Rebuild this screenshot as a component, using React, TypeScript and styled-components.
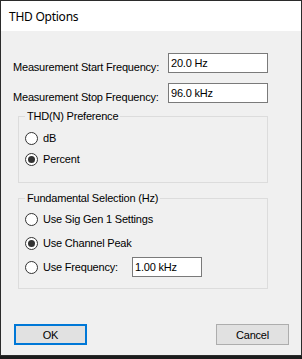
import styled, { createGlobalStyle } from "styled-components";

const GlobalStyle = createGlobalStyle`
  * { box-sizing: border-box; }
  html, body {
    margin: 0;
    padding: 0;
    background: #1c1c1c;
  }
  body {
    font-family: "Liberation Sans", Arial, sans-serif;
    font-size: 11px;
    letter-spacing: -0.2px;
    color: #000;
  }
`

const Window = styled.div`
  width: 302px;
  height: 356px;
  border: 1px solid #2b2b2b;
  background: #f0f0f0;
  display: flex;
  flex-direction: column;
`

const TitleBar = styled.div`
  flex: none;
  height: 30px;
  background: #fff;
  display: flex;
  align-items: center;
  padding-left: 8px;
  font-family: "Noto Sans", "Liberation Sans", sans-serif;
  font-size: 12px;
  letter-spacing: -0.25px;
`

const Body = styled.div`
  flex: 1;
  display: flex;
  flex-direction: column;
  padding: 22px 12px 10px 12px;
`

const FieldRow = styled.div`
  display: flex;
  height: 20px;

  & + & {
    margin-top: 10px;
  }
`

const FieldLabel = styled.label`
  width: 155px;
  padding-top: 8px;
  line-height: 13px;
`

const TextBox = styled.input<{ $w: number }>`
  width: ${({ $w }) => $w}px;
  height: 20px;
  margin: 0;
  border: 1px solid #7a7a7a;
  background: #fff;
  padding: 0 2px;
  font-family: "Liberation Sans", Arial, sans-serif;
  font-size: 11px;
  letter-spacing: -0.2px;
  color: #000;
  outline: none;
`

const Group = styled.fieldset<{ $mt: number; $pt: number; $pb: number }>`
  width: 250px;
  margin: ${({ $mt }) => $mt}px 0 0 5px;
  padding: ${({ $pt }) => $pt}px 6px ${({ $pb }) => $pb}px 6px;
  border: 1px solid #dcdcdc;
  min-width: 0;
`

const Legend = styled.legend`
  padding: 0 2px;
  line-height: 13px;
`

const Option = styled.div<{ $h: number }>`
  display: flex;
  align-items: center;
  height: ${({ $h }) => $h}px;
`

const Radio = styled.span<{ $checked?: boolean }>`
  flex: none;
  width: 13px;
  height: 13px;
  border: 1px solid #333;
  border-radius: 50%;
  background: #fff;
  margin-right: 5px;
  display: flex;
  align-items: center;
  justify-content: center;

  &::after {
    content: "";
    width: 7px;
    height: 7px;
    border-radius: 50%;
    background: ${({ $checked }) => ($checked ? "#333" : "transparent")};
  }
`

const OptionText = styled.span<{ $w?: number }>`
  line-height: 13px;
  width: ${({ $w }) => ($w ? `${$w}px` : "auto")};
`

const ButtonRow = styled.div`
  margin-top: auto;
  display: flex;
  justify-content: space-between;
  padding-left: 1px;
`

const Button = styled.button<{ $default?: boolean }>`
  width: 73px;
  height: 21px;
  padding: 0;
  background: #e1e1e1;
  border: ${({ $default }) => ($default ? "2px solid #0078d7" : "1px solid #adadad")};
  font-family: "Liberation Sans", Arial, sans-serif;
  font-size: 11px;
  letter-spacing: -0.2px;
  color: #000;
`

export default function App() {
  return (
    <>
      <GlobalStyle />
      <Window>
        <TitleBar>THD Options</TitleBar>
        <Body>
          <FieldRow>
            <FieldLabel>Measurement Start Frequency:</FieldLabel>
            <TextBox $w={100} value="20.0 Hz" readOnly />
          </FieldRow>
          <FieldRow>
            <FieldLabel>Measurement Stop Frequency:</FieldLabel>
            <TextBox $w={100} value="96.0 kHz" readOnly />
          </FieldRow>

          <Group $mt={7} $pt={5} $pb={12}>
            <Legend>THD(N) Preference</Legend>
            <Option $h={21}>
              <Radio />
              <OptionText>dB</OptionText>
            </Option>
            <Option $h={21}>
              <Radio $checked />
              <OptionText>Percent</OptionText>
            </Option>
          </Group>

          <Group $mt={9} $pt={2} $pb={9}>
            <Legend>Fundamental Selection (Hz)</Legend>
            <Option $h={24}>
              <Radio />
              <OptionText>Use Sig Gen 1 Settings</OptionText>
            </Option>
            <Option $h={24}>
              <Radio $checked />
              <OptionText>Use Channel Peak</OptionText>
            </Option>
            <Option $h={24}>
              <Radio />
              <OptionText $w={89}>Use Frequency:</OptionText>
              <TextBox $w={70} value="1.00 kHz" readOnly />
            </Option>
          </Group>

          <ButtonRow>
            <Button $default>OK</Button>
            <Button>Cancel</Button>
          </ButtonRow>
        </Body>
      </Window>
    </>
  );
}
